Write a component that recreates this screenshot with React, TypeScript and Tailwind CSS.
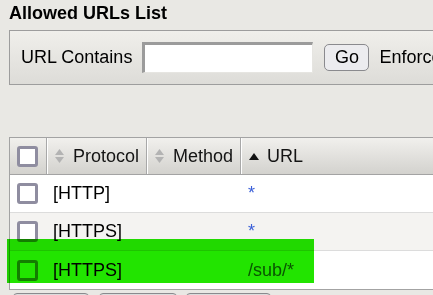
import React from "react";

const font = { fontFamily: '"Liberation Sans", Arial, sans-serif' };

function Check() {
  return <div className="w-[21px] h-[21px] border-[3px] border-[#8f8da0] rounded-[3px] bg-white" />;
}

function SortBoth() {
  return (
    <svg width="9" height="14" viewBox="0 0 9 14" className="shrink-0">
      <polygon points="4.5,0 9,6 0,6" fill="#b3b3b3" />
      <polygon points="0,8 9,8 4.5,14" fill="#b3b3b3" />
    </svg>
  );
}

function SortUp() {
  return (
    <svg width="10" height="7" viewBox="0 0 10 7" className="shrink-0">
      <polygon points="5,0 10,7 0,7" fill="#111" />
    </svg>
  );
}

const rows = [
  { proto: "[HTTP]", url: "*", bg: "bg-white" },
  { proto: "[HTTPS]", url: "*", bg: "bg-[#f4f3f1]" },
  { proto: "[HTTPS]", url: "/sub/*", bg: "bg-white" },
];

export default function App() {
  return (
    <div className="relative w-[433px] h-[295px] overflow-hidden bg-[#e9e8e4] text-[18px] text-black" style={font}>
      <div className="w-[700px]">
        <div className="h-[30px] pt-[3px] pl-[9px] font-bold leading-[21px]">Allowed URLs List</div>
        <div className="ml-[9px] h-[55px] border border-[#9d9d9d] bg-gradient-to-b from-[#f0efeb] to-[#dddcd8] flex items-center pl-[11px] leading-[21px]">
          <span>URL Contains</span>
          <div className="ml-[10px] w-[171px] h-[31px] bg-white border-t-[3px] border-l-[3px] border-[#9b9b9b] border-r border-b border-r-[#e6e5e1] border-b-[#e6e5e1]" />
          <div className="ml-[11px] w-[45px] h-[27px] rounded-[5px] border border-[#8a8a8e] bg-[#ececef] flex items-center justify-center">Go</div>
          <span className="ml-[10px]">Enforce</span>
        </div>

        <div className="ml-[9px] mt-[52px] border border-[#a3a3a3] bg-white leading-[21px]">
          <div className="flex h-[37px] border-b border-[#a3a3a3] bg-gradient-to-b from-[#f1f0ed] to-[#d3d2ce] text-[#141414]">
            <div className="w-[37px] border-r border-[#a8a8a8] flex items-center pl-[7px]">
              <Check />
            </div>
            <div className="w-[100px] border-r border-[#a8a8a8] border-l border-l-white flex items-center pl-[7px] gap-[9px]">
              <SortBoth />
              <span>Protocol</span>
            </div>
            <div className="w-[94px] border-r border-[#a8a8a8] border-l border-l-white flex items-center pl-[7px] gap-[9px]">
              <SortBoth />
              <span>Method</span>
            </div>
            <div className="flex-1 border-l border-l-white flex items-center pl-[7px] gap-[8px]">
              <SortUp />
              <span>URL</span>
            </div>
          </div>
          {rows.map((r, i) => (
            <div key={i} className={`flex h-[38px] ${i < 2 ? "border-b border-[#dcdcdc]" : ""} ${r.bg}`}>
              <div className="w-[37px] flex items-center pl-[7px]">
                <Check />
              </div>
              <div className="w-[100px] flex items-center pl-[6px]">{r.proto}</div>
              <div className="w-[94px]" />
              <div className="flex-1 flex items-center pl-[7px] text-[#3a5fd8]">{r.url}</div>
            </div>
          ))}
        </div>

        <div className="flex mt-[3px]">
          <div className="ml-[13px] w-[76px] h-[20px] rounded-[4px] border border-[#8a8a8e] bg-[#dcdcdc]" />
          <div className="ml-[10px] w-[78px] h-[20px] rounded-[4px] border border-[#8a8a8e] bg-[#dcdcdc]" />
          <div className="ml-[9px] w-[85px] h-[20px] rounded-[4px] border border-[#8a8a8e] bg-[#dcdcdc]" />
        </div>
      </div>

      <div className="absolute left-[7px] top-[239px] w-[307px] h-[44px] bg-[#22e400] mix-blend-multiply" />
    </div>
  );
}
